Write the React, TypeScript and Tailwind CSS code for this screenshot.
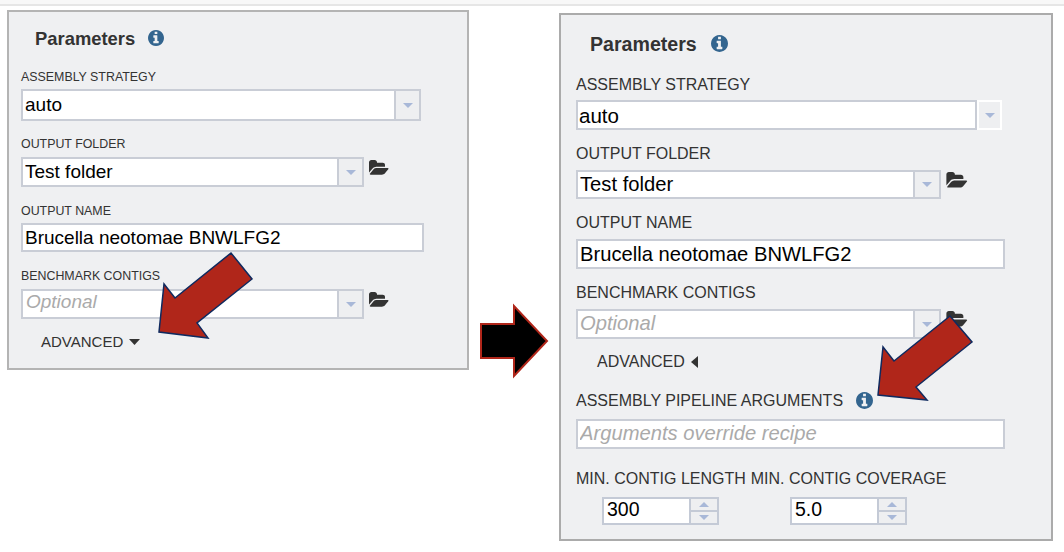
function InfoIcon({ className = "" }: { className?: string }) {
    return (
        <svg viewBox="0 128 1536 1536" className={"shrink-0 fill-[#33658f] " + className}>
            <path d="M1024 1376v-160q0-14-9-23t-23-9h-96v-512q0-14-9-23t-23-9h-320q-14 0-23 9t-9 23v160q0 14 9 23t23 9h96v320h-96q-14 0-23 9t-9 23v160q0 14 9 23t23 9h448q14 0 23-9t9-23zm-128-896v-160q0-14-9-23t-23-9h-192q-14 0-23 9t-9 23v160q0 14 9 23t23 9h192q14 0 23-9t9-23zm640 416q0 209-103 385.5t-279.5 279.5-385.5 103-385.5-103-279.5-279.5-103-385.5 103-385.5 279.5-279.5 385.5-103 385.5 103 279.5 279.5 103 385.5z" />
        </svg>
    )
}

function FolderIcon({ className = "" }: { className?: string }) {
    return (
        <svg viewBox="0 128 1920 1536" className={"shrink-0 fill-[#333333] " + className}>
            <path d="M1879 952q0 31-31 66l-336 396q-43 51-120.5 86.5t-143.5 35.5h-1088q-34 0-60.5-13t-26.5-43q0-31 31-66l336-396q43-51 120.5-86.5t143.5-35.5h1088q34 0 60.5 13t26.5 43zm-343-344v160h-832q-94 0-197 47.5t-164 119.5l-337 396-5 6q0-4-.5-12.5t-.5-12.5v-960q0-92 66-158t158-66h320q92 0 158 66t66 158v32h544q92 0 158 66t66 158z" />
        </svg>
    )
}

function DownTri({ className = "" }: { className?: string }) {
    return (
        <svg viewBox="0 0 10 5" className={"w-[10px] h-[5px] fill-[#a8b8d8] " + className}>
            <polygon points="0,0 10,0 5,5" />
        </svg>
    )
}

function UpTri() {
    return (
        <svg viewBox="0 0 10 5" className="w-[10px] h-[5px] fill-[#a8b8d8]">
            <polygon points="0,5 10,5 5,0" />
        </svg>
    )
}

type ComboProps = {
    value?: string
    placeholder?: string
    box: string
    text: string
    arrowBox: string
}

function Combo({ value, placeholder, box, text, arrowBox }: ComboProps) {
    return (
        <div className={"flex bg-white border-2 border-[#c9cdd6] " + box}>
            <input
                readOnly
                value={value ?? ""}
                placeholder={placeholder}
                className={"flex-1 min-w-0 bg-transparent outline-none text-black placeholder:text-[#aaaaaa] placeholder:italic " + text}
            />
            <div className={"flex items-center justify-center bg-[#eeeff1] border-l-2 border-[#c9cdd6] " + arrowBox}>
                <DownTri />
            </div>
        </div>
    )
}

function Spinner({ value }: { value: string }) {
    return (
        <div className="flex w-[117px] h-[28px] bg-white border-2 border-[#c4cad6]">
            <input readOnly value={value} className="w-[85px] pl-[3px] pb-[2px] bg-transparent outline-none text-[19.5px] text-black" />
            <div className="flex-1 flex flex-col border-l-2 border-[#c4cad6] bg-[#eeeff1]">
                <div className="flex-1 flex items-center justify-center border-b-2 border-[#c4cad6]">
                    <UpTri />
                </div>
                <div className="flex-1 flex items-center justify-center">
                    <DownTri />
                </div>
            </div>
        </div>
    )
}

function LeftPanel() {
    const label = "h-[16px] leading-[16px] text-[12.4px] text-[#333333]"
    const text = "pl-[2px] text-[19px]"
    return (
        <section className="w-[462px] h-[360px] shrink-0 mt-[4px] pl-[12px] bg-[#eff0f2] border-2 border-[#b4b4b4]">
            <div className="flex items-center mt-[14px] ml-[14px] h-[24px]">
                <h2 className="pt-[2px] text-[18.4px] font-bold text-[#333333]">Parameters</h2>
                <InfoIcon className="ml-[13px] w-[16px] h-[16px]" />
            </div>

            <div className={label + " mt-[19px]"}>ASSEMBLY STRATEGY</div>
            <Combo value="auto" box="w-[400px] h-[32px] mt-[4px]" text={text} arrowBox="w-[25px]" />

            <div className={label + " mt-[15px]"}>OUTPUT FOLDER</div>
            <div className="flex items-start mt-[5px]">
                <Combo value="Test folder" box="w-[343px] h-[30px]" text={text} arrowBox="w-[25px]" />
                <FolderIcon className="ml-[5px] mt-[3px] w-[20px] h-[16px]" />
            </div>

            <div className={label + " mt-[16px]"}>OUTPUT NAME</div>
            <input
                readOnly
                value="Brucella neotomae BNWLFG2"
                className={"block w-[403px] h-[29px] mt-[4px] bg-white border-2 border-[#c9cdd6] outline-none text-black " + text}
            />

            <div className={label + " mt-[16px]"}>BENCHMARK CONTIGS</div>
            <div className="flex items-start mt-[5px]">
                <Combo placeholder="Optional" box="w-[343px] h-[30px]" text="pl-[3px] pb-[4px] text-[19px]" arrowBox="w-[25px]" />
                <FolderIcon className="ml-[5px] mt-[3px] w-[20px] h-[16px]" />
            </div>

            <div className="flex items-center h-[20px] mt-[13px] ml-[20px] text-[15px] text-[#333333]">
                ADVANCED
                <svg viewBox="0 0 11 6" className="ml-[6px] w-[11px] h-[6px] fill-[#333333]">
                    <polygon points="0,0 11,0 5.5,6" />
                </svg>
            </div>
        </section>
    )
}

function RightPanel() {
    const label = "h-[18px] leading-[20px] text-[16px] text-[#333333] whitespace-nowrap"
    const field = "pl-[2px] text-[20.2px]"
    return (
        <section className="w-[494px] h-[528px] shrink-0 mt-[7px] ml-[90px] pl-[15px] bg-[#eff0f2] border-2 border-[#ababab]">
            <div className="flex items-center mt-[16px] ml-[14px] h-[24px]">
                <h2 className="pt-[4px] text-[19.6px] font-bold text-[#333333]">Parameters</h2>
                <InfoIcon className="ml-[14px] w-[17px] h-[17px]" />
            </div>

            <div className={label + " mt-[20px]"}>ASSEMBLY STRATEGY</div>
            <div className="flex mt-[7px]">
                <input
                    readOnly
                    value="auto"
                    className="block w-[401px] h-[30px] pl-[1px] pt-[2px] bg-white border-2 border-[#c9cdd6] outline-none text-[20.5px] text-black"
                />
                <div className="flex items-center justify-center w-[25px] h-[30px] bg-[#eeeff1] border-2 border-white">
                    <DownTri />
                </div>
            </div>

            <div className={label + " mt-[14px]"}>OUTPUT FOLDER</div>
            <div className="flex items-start mt-[8px]">
                <Combo value="Test folder" box="w-[365px] h-[29px]" text="pl-[2px] text-[20.2px]" arrowBox="w-[26px]" />
                <FolderIcon className="ml-[5px] mt-[2px] w-[22px] h-[17px]" />
            </div>

            <div className={label + " mt-[14px]"}>OUTPUT NAME</div>
            <input
                readOnly
                value="Brucella neotomae BNWLFG2"
                className={"block w-[429px] h-[30px] mt-[8px] bg-white border-2 border-[#c9cdd6] outline-none text-black " + field}
            />

            <div className={label + " mt-[14px]"}>BENCHMARK CONTIGS</div>
            <div className="flex items-start mt-[8px]">
                <Combo placeholder="Optional" box="w-[365px] h-[30px]" text="pl-[2px] pb-[2px] text-[20.2px]" arrowBox="w-[26px]" />
                <FolderIcon className="ml-[5px] mt-[2px] w-[22px] h-[17px]" />
            </div>

            <div className="flex items-center h-[20px] mt-[12px] ml-[21px] pt-[2px] text-[16px] text-[#333333]">
                ADVANCED
                <svg viewBox="0 0 7 12" className="ml-[6px] w-[7px] h-[12px] fill-[#333333]">
                    <polygon points="7,0 7,12 0,6" />
                </svg>
            </div>

            <div className={label + " flex items-center mt-[20px] pt-[1px]"}>
                ASSEMBLY PIPELINE ARGUMENTS
                <InfoIcon className="ml-[13px] w-[17px] h-[17px]" />
            </div>
            <input
                readOnly
                placeholder="Arguments override recipe"
                className="block w-[429px] h-[30px] mt-[10px] pl-[2px] pb-[2px] bg-white border-2 border-[#c9cdd6] outline-none text-[20.2px] placeholder:text-[#aaaaaa] placeholder:italic"
            />

            <div className="flex gap-[5px] h-[18px] leading-[18px] mt-[21px] text-[16px] text-[#333333] whitespace-nowrap">
                <span>MIN. CONTIG LENGTH</span>
                <span>MIN. CONTIG COVERAGE</span>
            </div>
            <div className="flex gap-[71px] mt-[9px] ml-[26px]">
                <Spinner value="300" />
                <Spinner value="5.0" />
            </div>
        </section>
    )
}

function Arrows() {
    return (
        <svg viewBox="0 0 1064 552" className="absolute inset-0 w-[1064px] h-[552px] pointer-events-none">
            <polygon
                points="481,324 514,324 514,306 547,341 514,376 514,358 481,358"
                fill="#000000"
                stroke="#b0261a"
                strokeWidth="2"
            />
            <polygon
                points="159,332 164,284 175,298 231,253 252,279 197,323 208,338"
                fill="#b0261a"
                stroke="#0f2a5f"
                strokeWidth="1.5"
            />
            <polygon
                points="878,395 883,347 894,361 950,316 972,342 916,387 927,400"
                fill="#b0261a"
                stroke="#0f2a5f"
                strokeWidth="1.5"
            />
        </svg>
    )
}

export default function App() {
    return (
        <div className="relative w-[1064px] h-[552px] overflow-hidden bg-white font-['Liberation_Sans',Arial,sans-serif]">
            <div className="h-[6px] bg-[#f8f8f8] border-b-2 border-[#e6e6e6]" />
            <main className="flex items-start ml-[7px]">
                <LeftPanel />
                <RightPanel />
            </main>
            <Arrows />
        </div>
    )
}
